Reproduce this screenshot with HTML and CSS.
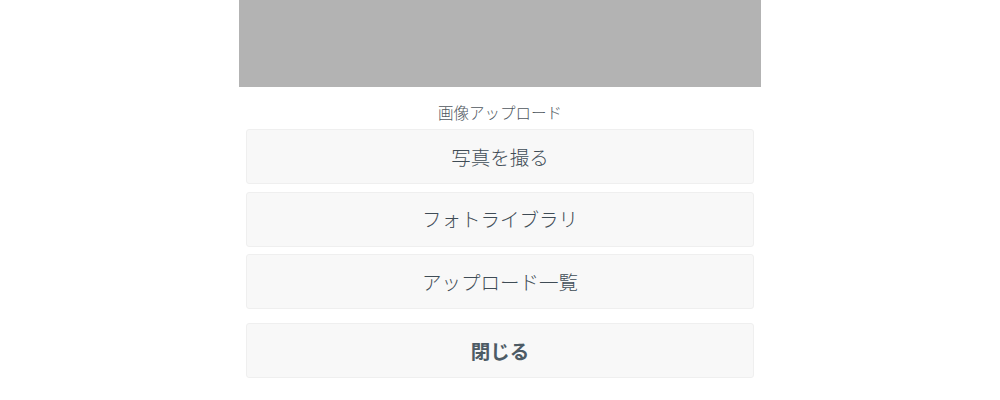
FILE: index.html
```html
<!DOCTYPE html>
<html lang="ja">
<head>
<meta charset="utf-8">
<link rel="stylesheet" href="styles.css">
</head>
<body>
<div class="sheet">
  <div class="preview"></div>
  <div class="actions">
    <div class="title">画像アップロード</div>
    <div class="group">
      <button class="btn">写真を撮る</button>
      <button class="btn">フォトライブラリ</button>
      <button class="btn">アップロード一覧</button>
    </div>
    <button class="btn btn-close">閉じる</button>
  </div>
</div>
</body>
</html>
```

FILE: styles.css
```css
html, body {
  margin: 0;
  padding: 0;
  background: #ffffff;
}
body {
  font-family: "Noto Sans CJK JP", "Noto Sans", sans-serif;
}
.sheet {
  width: 522px;
  margin: 0 auto;
}
.preview {
  height: 87px;
  background: #b3b3b3;
}
.actions {
  padding: 0 7px;
  display: flex;
  flex-direction: column;
}
.title {
  height: 42px;
  box-sizing: border-box;
  padding-top: 14px;
  text-align: center;
  font-size: 15.5px;
  font-weight: 300;
  line-height: 22px;
  color: #4f575e;
}
.group {
  display: flex;
  flex-direction: column;
  gap: 7.5px;
}
.btn {
  display: block;
  width: 100%;
  height: 55px;
  margin: 0;
  padding: 0 0 1px;
  box-sizing: border-box;
  background: #f8f8f8;
  border: 1px solid #efefef;
  border-radius: 3px;
  font-family: "Noto Sans CJK JP", "Noto Sans", sans-serif;
  font-size: 19.5px;
  font-weight: 300;
  color: #3f4c56;
  text-align: center;
}
.btn-close {
  margin-top: 14px;
  font-weight: bold;
  color: #4d5b65;
}
```
